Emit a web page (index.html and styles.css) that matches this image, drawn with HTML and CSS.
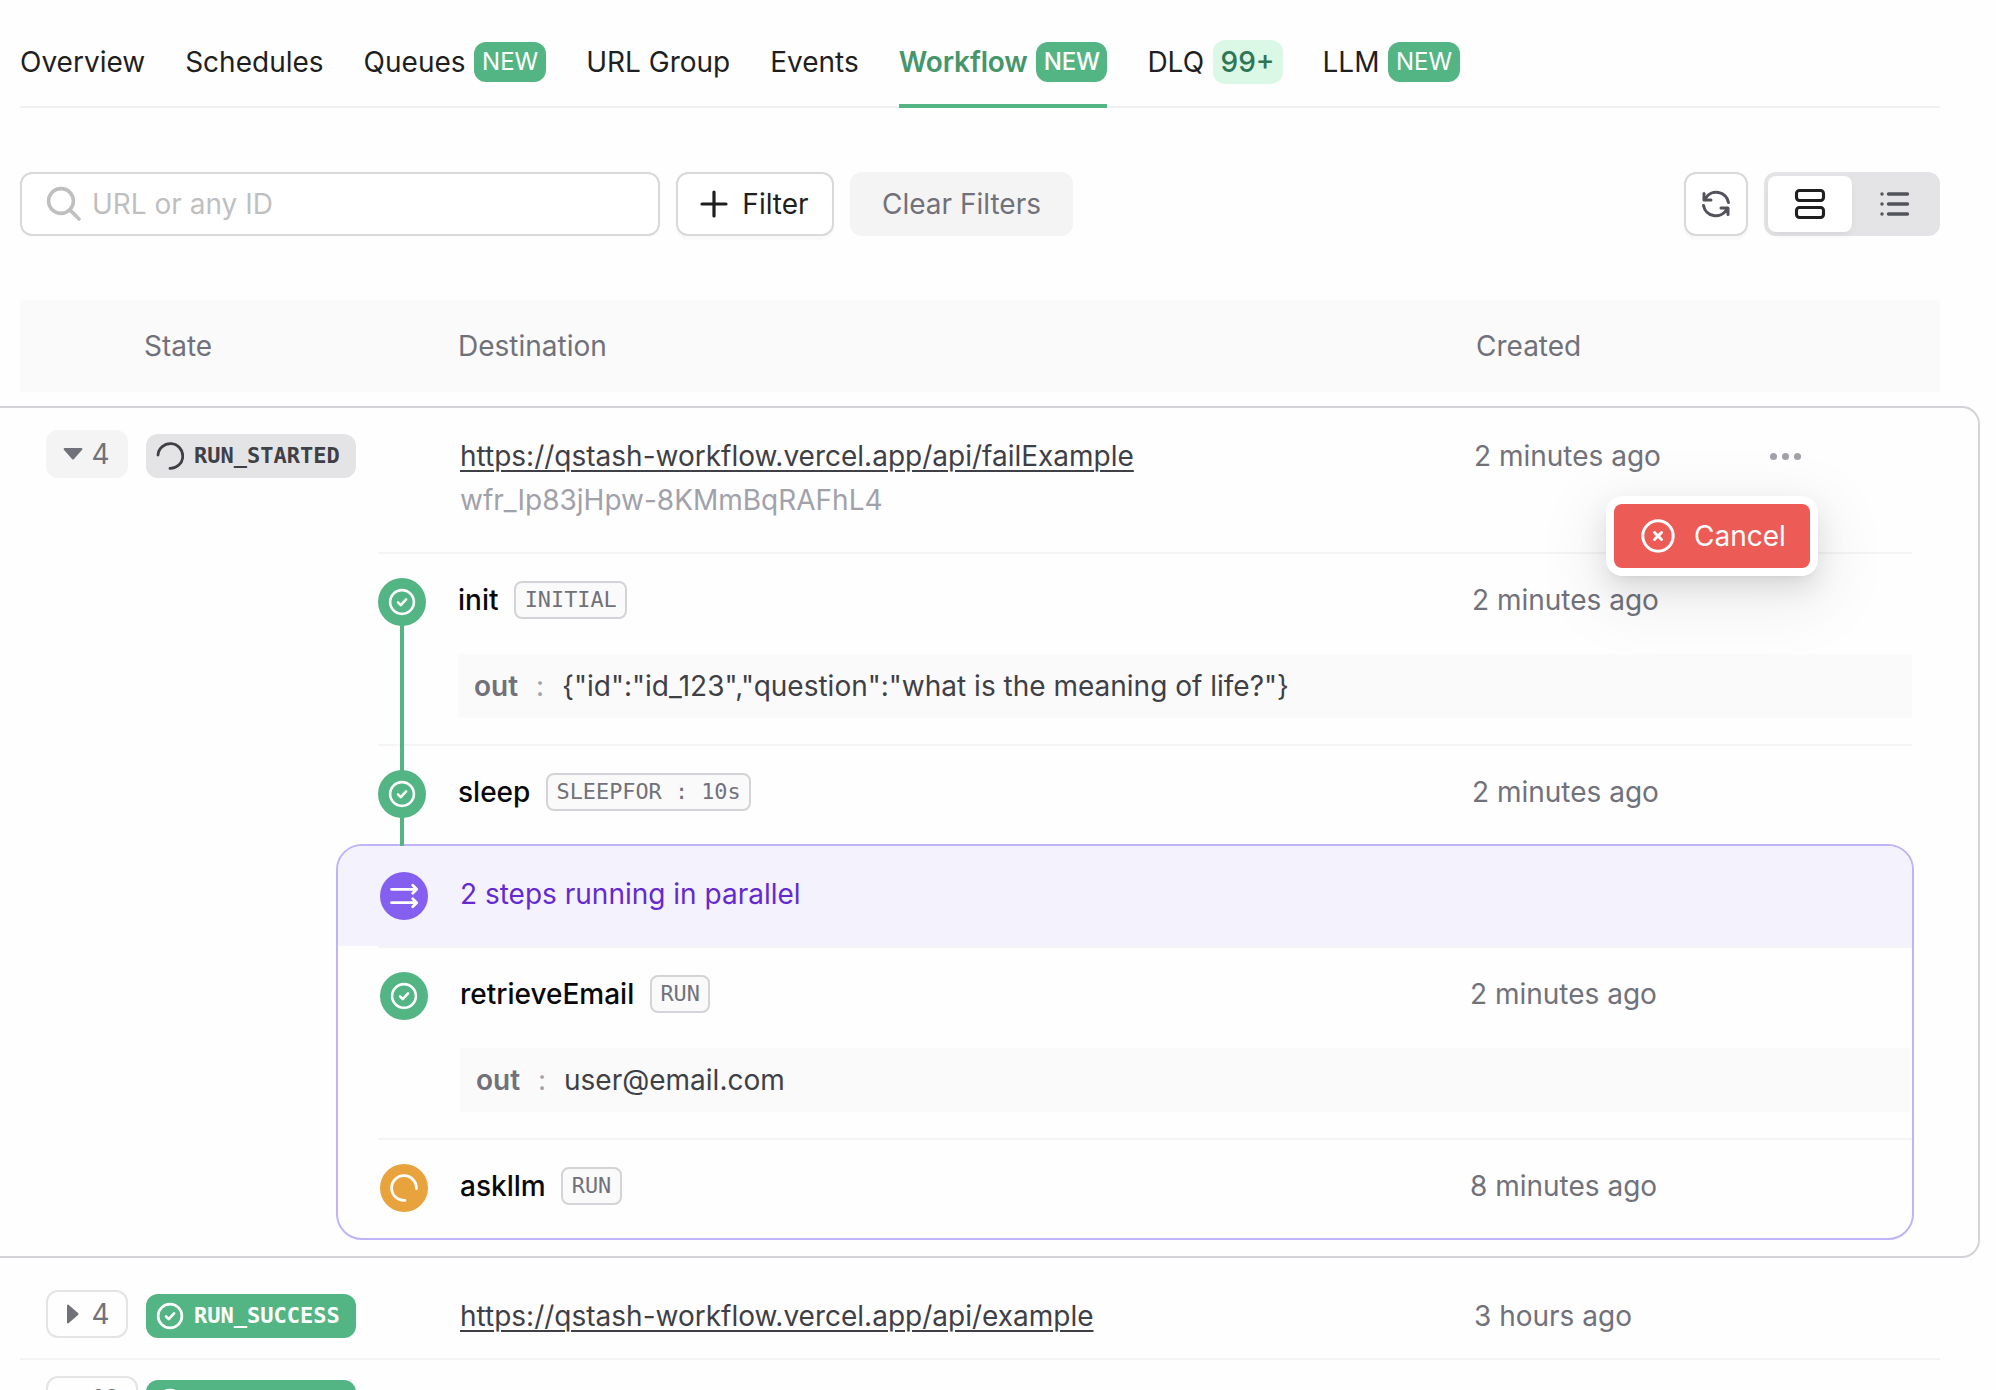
FILE: index.html
```html
<!DOCTYPE html>
<html lang="en">
<head>
<meta charset="utf-8">
<title>Workflow</title>
<link rel="stylesheet" href="styles.css">
</head>
<body>
<svg class="defs" aria-hidden="true">
  <symbol id="check" viewBox="0 0 24 24"><circle cx="12" cy="12" r="10.2"/><path d="M8.6 12.4l2.3 2.3 4.6-4.9"/></symbol>
</svg>
<main class="page">
  <nav class="tabs">
    <a class="tab">Overview</a>
    <a class="tab">Schedules</a>
    <a class="tab">Queues<span class="new">NEW</span></a>
    <a class="tab">URL Group</a>
    <a class="tab">Events</a>
    <a class="tab active">Workflow<span class="new">NEW</span></a>
    <a class="tab">DLQ<span class="count">99+</span></a>
    <a class="tab">LLM<span class="new">NEW</span></a>
  </nav>

  <section class="toolbar">
    <div class="search">
      <svg width="36" height="36" viewBox="0 0 36 36"><circle cx="15" cy="15" r="12.4"/><path d="M24 24l9 9"/></svg>
      <span>URL or any ID</span>
    </div>
    <button class="btn filter"><svg width="28" height="28" viewBox="0 0 28 28"><path d="M14 2v24M2 14h24"/></svg>Filter</button>
    <button class="btn clear">Clear Filters</button>
    <button class="btn refresh" aria-label="Refresh">
      <svg width="30" height="30" viewBox="0 0 30 30"><path d="M27.500 13.500A12.500 12.500 0 0 0 4.500 9.300L3 11M3 4.500V11h7M2.500 16.500A12.500 12.500 0 0 0 25.500 20.700L27 19M27 25.500V19h-7"/></svg>
    </button>
    <div class="toggle">
      <span class="view on"><svg width="32" height="32" viewBox="0 0 32 32"><rect x="2.500" y="2.500" width="27" height="10" rx="3"/><rect x="2.500" y="19.500" width="27" height="10" rx="3"/></svg></span>
      <span class="view"><svg width="32" height="28" viewBox="0 0 32 28"><path d="M10.500 4h19M10.500 14h19M10.500 24h19M4 4h.01M4 14h.01M4 24h.01"/></svg></span>
    </div>
  </section>

  <div class="thead"><span>State</span><span>Destination</span><span>Created</span></div>

  <article class="run open">
    <div class="row">
      <button class="expander pressed"><svg width="20" height="12" viewBox="0 0 20 12"><path d="M1.500 0h17q1.500.5.6 1.800L11 11q-1 1.200-2 0L.9 1.800Q0 .5 1.500 0z"/></svg>4</button>
      <span class="state started"><svg width="28" height="28" viewBox="0 0 28 28"><path d="M2 13A12.400 12.400 0 1 1 14 26.400"/></svg>RUN_STARTED</span>
      <div class="dest"><a>https://qstash-workflow.vercel.app/api/failExample</a><small>wfr_Ip83jHpw-8KMmBqRAFhL4</small></div>
      <time>2 minutes ago</time>
      <div class="more"><i></i><i></i><i></i>
        <div class="menu"><button class="cancel"><svg width="36" height="36" viewBox="0 0 36 36"><circle cx="18" cy="18" r="15.200"/><path d="M14.500 14.500l7 7M21.500 14.500l-7 7"/></svg>Cancel</button></div>
      </div>
    </div>

    <div class="steps">
      <section class="step linked">
        <div class="line">
          <span class="dot"><svg width="28" height="28"><use href="#check"/></svg></span>
          <b>init</b><code>INITIAL</code><time>2 minutes ago</time>
        </div>
        <div class="out"><strong>out</strong><em>:</em><span>{"id":"id_123","question":"what is the meaning of life?"}</span></div>
      </section>
      <section class="step linked">
        <div class="line">
          <span class="dot"><svg width="28" height="28"><use href="#check"/></svg></span>
          <b>sleep</b><code>SLEEPFOR : 10s</code><time>2 minutes ago</time>
        </div>
      </section>
    </div>

    <div class="parallel">
      <header>
        <span class="dot violet"><svg width="32" height="32" viewBox="0 0 32 32"><path d="M3.500 9.300h25M24.700 5.300l4 4-4 4M3.500 22.700h25M24.700 18.700l4 4-4 4"/></svg></span>
        2 steps running in parallel
      </header>
      <section class="step">
        <div class="line">
          <span class="dot"><svg width="28" height="28"><use href="#check"/></svg></span>
          <b>retrieveEmail</b><code>RUN</code><time>2 minutes ago</time>
        </div>
        <div class="out"><strong>out</strong><em>:</em><span>user@email.com</span></div>
      </section>
      <section class="step">
        <div class="line">
          <span class="dot amber"><svg width="30" height="30" viewBox="0 0 30 30"><path d="M27.400 15.500A12.400 12.400 0 1 0 16 27.400"/></svg></span>
          <b>askllm</b><code>RUN</code><time>8 minutes ago</time>
        </div>
      </section>
    </div>
  </article>

  <article class="run">
    <div class="row">
      <button class="expander"><svg width="12" height="20" viewBox="0 0 12 20"><path d="M0 1.500Q.5 0 1.800.9L11 9q1.200 1 0 2l-9.200 8.100Q.5 20 0 18.500z"/></svg>4</button>
      <span class="state success"><svg width="28" height="28"><use href="#check"/></svg>RUN_SUCCESS</span>
      <div class="dest"><a>https://qstash-workflow.vercel.app/api/example</a></div>
      <time>3 hours ago</time>
    </div>
  </article>
  <article class="run">
    <div class="row">
      <button class="expander"><svg width="12" height="20" viewBox="0 0 12 20"><path d="M0 1.500Q.5 0 1.800.9L11 9q1.200 1 0 2l-9.200 8.100Q.5 20 0 18.500z"/></svg>10</button>
      <span class="state success"><svg width="28" height="28"><use href="#check"/></svg>RUN_SUCCESS</span>
      <div class="dest"></div>
    </div>
  </article>
</main>
</body>
</html>
```
FILE: styles.css
```css
* { box-sizing: border-box; }
html, body { margin: 0; height: 1390px; overflow: hidden; }
body {
  background: #fefefe;
  color: #71717a;
  font: 400 28px/44px Inter, "Liberation Sans", sans-serif;
  font-optical-sizing: none;
}
svg { fill: none; stroke: currentColor; stroke-linecap: round; stroke-linejoin: round; flex: none; }
button { font: inherit; color: inherit; padding: 0; border: 0; background: none; display: flex; align-items: center; }
.defs { display: block; width: 0; height: 0; }
.page { padding: 16px 56px 0 20px; }

/* tabs */
.tabs { display: flex; gap: 40px; height: 92px; border-bottom: 2px solid #f0f0f0; color: #1f1f1f; white-space: nowrap; }
.tab { display: flex; align-items: flex-start; gap: 8.500px; height: 92px; padding-top: 24px; }
.new { height: 40px; margin-top: 2px; padding: 0 8px; border-radius: 12px; background: #54b584; color: #fff; font-size: 24px; line-height: 39px; }
.count { height: 44px; padding: 0 8px; border-radius: 12px; background: #dbf8e7; color: #2f7656; line-height: 44px; font-weight: 500; }
.active { color: #46966c; font-weight: 600; letter-spacing: -.15px; border-bottom: 4px solid #54b584; }
.active .new { padding: 0 7.500px; font-weight: 500; }

/* toolbar */
.toolbar { display: flex; gap: 16px; margin-top: 64px; }
.search { display: flex; align-items: center; gap: 10px; width: 640px; height: 64px; padding-left: 24px; border: 2px solid #d9d9d9; border-radius: 12px; color: #bfbfbf; background: #fff; }
.search svg { stroke-width: 3.600; }
.btn { height: 64px; border-radius: 12px; justify-content: center; white-space: nowrap; }
.filter { width: 158px; gap: 14.500px; padding-right: 1.500px; border: 2px solid #d9d9d9; background: #fff; color: #1f1f1f; box-shadow: 0 4px 0 rgba(0,0,0,.02); }
.filter svg { stroke-width: 3.200; }
.clear { width: 223px; background: #f4f4f5; }
.refresh { width: 64px; margin-left: auto; border: 2px solid #d9d9d9; background: #fff; color: #52525b; box-shadow: 0 4px 0 rgba(0,0,0,.02); }
.refresh svg { stroke-width: 3; }
.toggle { display: flex; width: 176px; height: 64px; padding: 4px; border-radius: 12px; background: #e4e4e7; color: #52525b; }
.view { flex: 1; display: flex; align-items: center; justify-content: center; }
.view svg { stroke-width: 3.400; }
.view.on { background: #fff; color: #1f1f1f; border-radius: 8px; box-shadow: 0 4px 8px -2px rgba(0,0,0,.08); }
.view.on svg { stroke-width: 3.100; }

/* table */
.thead { display: grid; grid-template-columns: 314px 1018px 1fr; height: 92px; margin-top: 64px; padding-left: 124px; background: #fafafa; line-height: 92px; }
.run { position: relative; height: 86px; border-bottom: 2px solid #f4f4f5; }
.run .row { padding-top: 16px; }
.run.open { height: 852px; margin: 14px -40px 16px; border: 2px solid #d4d4d8; border-radius: 18px; }
.run.open .row { height: 144px; padding: 22px 0 0 64px; }
.row { display: grid; grid-template-columns: 100px 314px 1014px 1fr auto; align-items: start; padding-left: 26px; }
.expander { gap: 9px; width: 82px; height: 48px; padding-left: 14.500px; border: 2px solid #e4e4e7; border-radius: 12px; }
.expander svg { fill: currentColor; stroke: none; width: 20px; }
.pressed { background: #f4f4f5; border-color: #f4f4f5; }
.run:last-child .expander { width: 92px; }
.state { display: flex; align-items: center; gap: 10px; width: 210px; height: 44px; margin-top: 4px; padding-left: 10px; border-radius: 12px; font: 700 22px/44px "DejaVu Sans Mono", monospace; }
.state svg { stroke-width: 2.300; }
.started { background: #e4e4e7; color: #3f3f46; }
.started svg { stroke-width: 2.800; }
.success { background: #54b584; color: #fff; }
.dest { display: flex; flex-direction: column; padding-top: 4px; }
.dest a { color: #3f3f46; text-decoration: underline; text-decoration-thickness: 2px; text-underline-offset: 4px; }
.dest small { font-size: 28px; color: #a1a1aa; }
.row time { padding-top: 4px; }
.more { position: relative; display: flex; gap: 5px; padding-top: 23px; margin-right: 177px; }
.more i { width: 7px; height: 7px; border-radius: 50%; background: #a1a1aa; }
.menu { position: absolute; z-index: 5; top: 66px; right: -17px; padding: 8px; border-radius: 16px; background: #fff; box-shadow: 0 12px 28px rgba(0,0,0,.1), 0 6px 12px -8px rgba(0,0,0,.12), 0 18px 60px 20px rgba(0,0,0,.05); }
.cancel { gap: 18px; width: 196px; height: 64px; padding-left: 26px; border-radius: 8px; background: #ec5b56; color: #fff; }
.cancel svg { stroke-width: 3; }

/* steps */
.steps { margin: 0 66px 0 396px; }
.step { position: relative; height: 192px; padding-top: 24px; border-top: 2px solid #f4f4f5; }
.steps .step:last-child { height: 102px; }
.line { position: relative; display: flex; align-items: center; height: 48px; }
.dot { position: relative; z-index: 2; display: flex; align-items: center; justify-content: center; width: 48px; height: 48px; margin-right: 32px; border-radius: 50%; background: #54b584; color: #fff; flex: none; }
.dot svg { stroke-width: 2.200; }
.linked::after { content: ""; position: absolute; z-index: 1; left: 22px; top: 60px; width: 4px; height: 160px; background: #54b584; }
.linked:last-child::after { height: 40px; }
.dot.violet { background: #855ff0; }
.dot.violet svg { stroke-width: 2.800; }
.dot.amber { background: #e8a33d; }
.dot.amber svg { stroke-width: 2.800; }
.line b { margin-top: -4px; color: #09090b; font-weight: 500; line-height: 44px; }
.line code { height: 38px; margin: -4px 0 0 15.700px; padding: 0 8.500px; border: 2px solid #d4d4d8; border-radius: 8px; background: #fafafa; font: 21.850px/33px "DejaVu Sans Mono", monospace; white-space: pre; }
.line time { position: absolute; left: 1094px; top: 0; }
.out { display: flex; height: 64px; margin: 28px 0 0 80px; padding-left: 16px; background: #fafafa; line-height: 64px; }
.out strong { font-weight: 600; width: 60px; }
.out em { font-style: normal; color: #a1a1aa; width: 28px; padding-left: 2px; }
.out span { color: #3f3f46; }

/* parallel group */
.parallel { height: 396px; margin: -2px 64px 0 354px; border: 2px solid #c0b3f9; border-radius: 26px; overflow: hidden; }
.parallel header { display: flex; align-items: flex-start; height: 100px; padding: 26px 0 0 42px; background: #f4f2fd; color: #6429d0; }
.parallel .step { margin-left: 40px; padding-left: 2px; }
.parallel .line time { left: 1090px; }
.parallel .out { margin-right: 2px; }
```
